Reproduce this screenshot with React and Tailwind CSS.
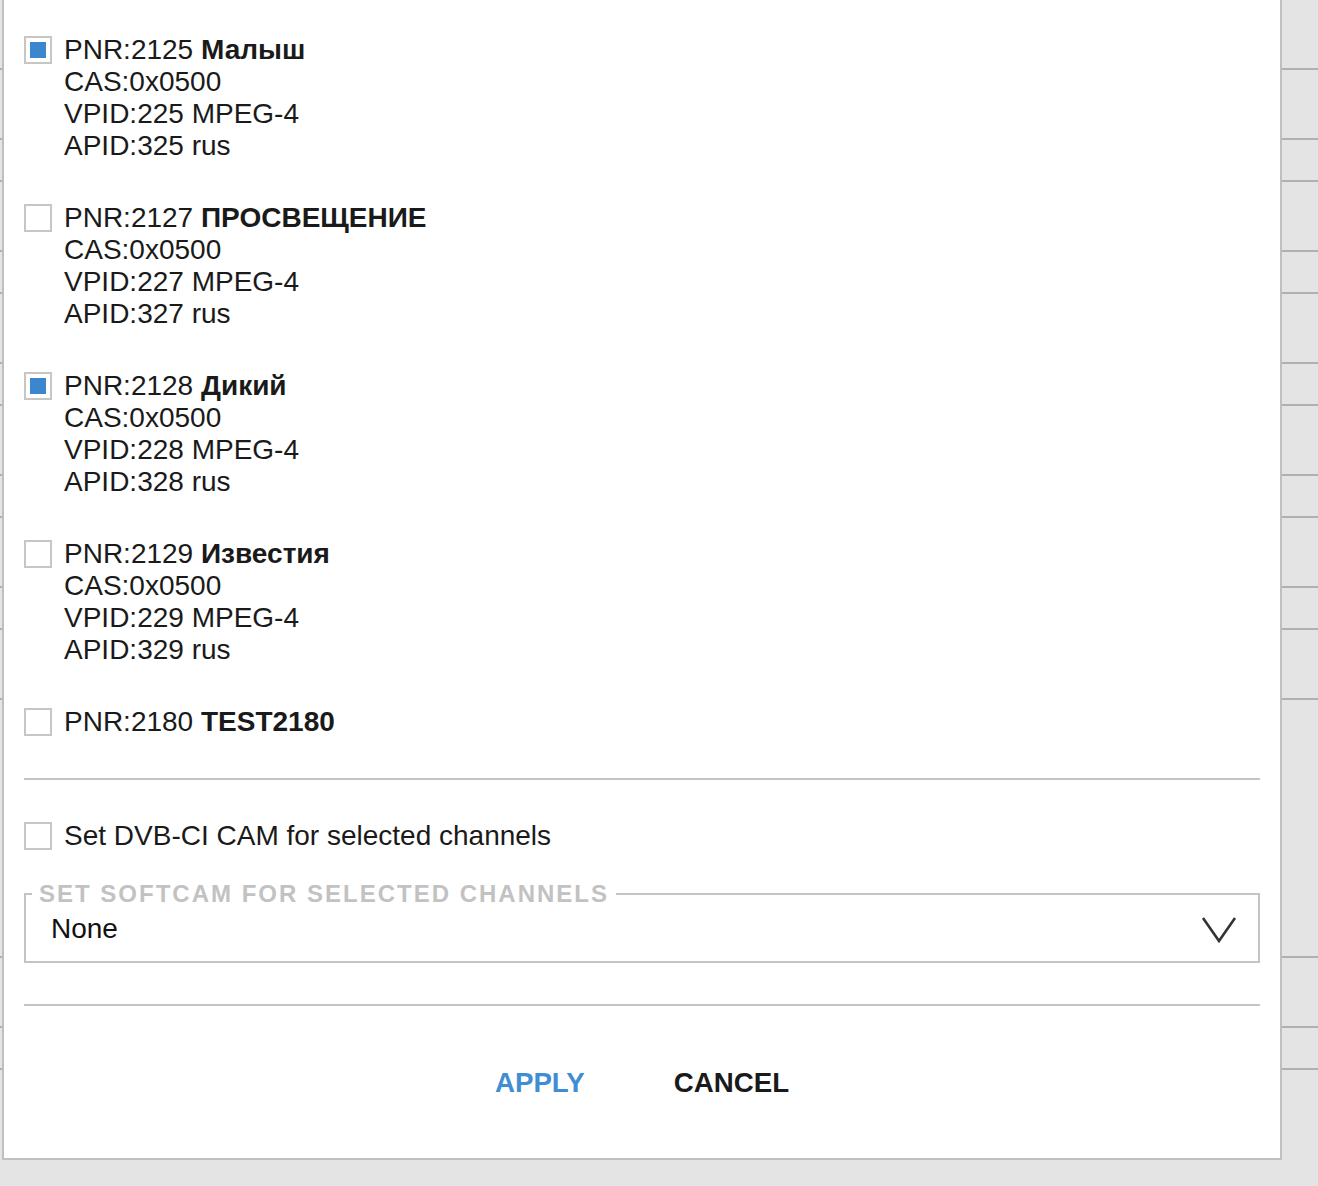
import React from 'react'

const channels = [
    { pnr: 2125, name: 'Малыш', cas: '0x0500', vpid: '225 MPEG-4', apid: '325 rus', checked: true },
    { pnr: 2127, name: 'ПРОСВЕЩЕНИЕ', cas: '0x0500', vpid: '227 MPEG-4', apid: '327 rus', checked: false },
    { pnr: 2128, name: 'Дикий', cas: '0x0500', vpid: '228 MPEG-4', apid: '328 rus', checked: true },
    { pnr: 2129, name: 'Известия', cas: '0x0500', vpid: '229 MPEG-4', apid: '329 rus', checked: false },
    { pnr: 2180, name: 'TEST2180', checked: false },
]

// background table rows behind the dialog (content heights, each followed by a 2px line)
const rows = [68, 68, 40, 68, 40, 68, 40, 68, 40, 68, 40, 68, 256, 68, 40]

const Checkbox = ({ checked }) => (
    <div className="mt-[2px] w-[28px] h-[28px] shrink-0 border-2 border-[#c6c6c6] bg-white p-[4px]">
        {checked && <div className="w-full h-full bg-[#3b86cc]" />}
    </div>
)

const App = () => {
    return (
        <div className="relative w-[1318px] h-[1186px] overflow-hidden bg-[#e4e4e4] font-['Liberation_Sans',Arial,sans-serif]">
            <div className="flex flex-col">
                {rows.map((h, i) => (
                    <div key={i} className="border-b-2 border-[#b0b0b0]" style={{ height: h + 2 }} />
                ))}
            </div>

            <div className="absolute left-[2px] top-[-2px] w-[1280px] h-[1162px] border-2 border-[#c0c0c0] bg-white pl-[20px] pr-[20px] pt-[34px] flex flex-col">
                {channels.map((ch) => (
                    <div key={ch.pnr} className="flex gap-[12px] mb-[40px]">
                        <Checkbox checked={ch.checked} />
                        <div className="text-[28px] leading-[32px] text-[#1a1a1a]">
                            <div>
                                PNR:{ch.pnr} <span className="font-bold">{ch.name}</span>
                            </div>
                            {ch.cas && (
                                <>
                                    <div>CAS:{ch.cas}</div>
                                    <div>VPID:{ch.vpid}</div>
                                    <div>APID:{ch.apid}</div>
                                </>
                            )}
                        </div>
                    </div>
                ))}

                <div className="h-[2px] bg-[#c4c4c4]" />

                <div className="flex gap-[12px] mt-[40px]">
                    <Checkbox checked={false} />
                    <div className="text-[28px] leading-[32px] text-[#1a1a1a]">Set DVB-CI CAM for selected channels</div>
                </div>

                <fieldset className="mt-[30px] border-2 border-[#c4c4c4] pl-[25px] pr-[21px] pt-[7px] pb-[16px]">
                    <legend className="ml-[-19px] px-[7px] text-[24px] leading-[24px] font-bold tracking-[2px] text-[#c2c2c2]">
                        SET SOFTCAM FOR SELECTED CHANNELS
                    </legend>
                    <div className="flex items-center justify-between">
                        <span className="text-[28px] leading-[32px] text-[#111]">None</span>
                        <svg width="36" height="30" viewBox="0 0 36 30" fill="none" stroke="#333" strokeWidth="2.6">
                            <polyline points="2,4 18,27 34,4" />
                        </svg>
                    </div>
                </fieldset>

                <div className="mt-[41px] h-[2px] bg-[#c4c4c4]" />

                <div className="mt-[61px] flex justify-center gap-[89px] text-[27.7px] leading-[32px] font-bold">
                    <button className="text-[#3f8dd3]">APPLY</button>
                    <button className="text-[#1a1a1a]">CANCEL</button>
                </div>
            </div>
        </div>
    )
}

export default App
